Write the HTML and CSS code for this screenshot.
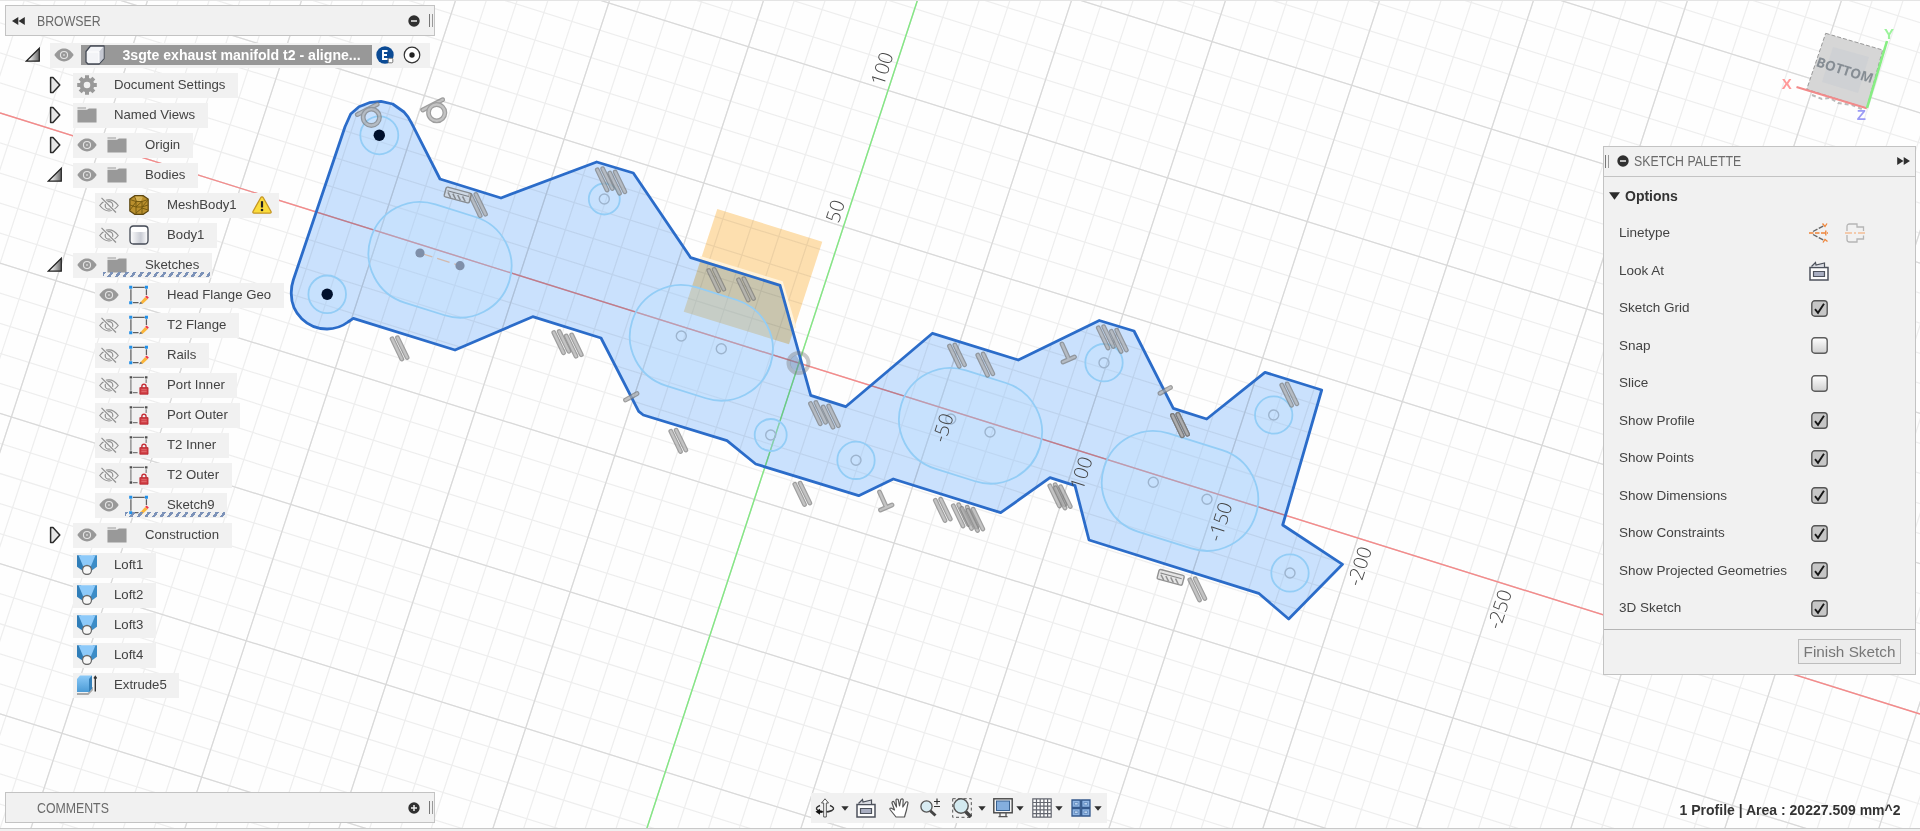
FILE: index.html
```html
<!DOCTYPE html>
<html lang="en">
<head>
<meta charset="utf-8">
<title>Sketch editor</title>
<link rel="stylesheet" href="styles.css">
</head>
<body>
<svg class="defs" width="0" height="0">
  <defs>
    <linearGradient id="gBlue" x1="0" x2="0" y1="0" y2="1"><stop offset="0" stop-color="#8ccaf8"/><stop offset="1" stop-color="#4b9bd6"/></linearGradient>
    <linearGradient id="gTri" x1="0" x2="1"><stop offset=".3" stop-color="#e8e8e8"/><stop offset="1" stop-color="#666"/></linearGradient>
    <linearGradient id="gBody" x1="0" x2="1"><stop offset="0" stop-color="#fff"/><stop offset=".6" stop-color="#c9ccd4"/><stop offset="1" stop-color="#fff"/></linearGradient>
    <symbol id="open" viewBox="0 0 16 16"><path d="M14.3 1.2v13H1.2z" fill="url(#gTri)" stroke="#222" stroke-width="1.2"/></symbol>
    <symbol id="shut" viewBox="0 0 16 18"><path d="M3.600 1.500h2.400l6.800 7.500-6.800 7.500H3.600z" fill="#e6e6e6" stroke="#2b2b2b" stroke-width="1.500" stroke-linejoin="round"/></symbol>
    <symbol id="eye" viewBox="0 0 20 14"><path d="M.3 7C3.5 2.300 6.600.6 10 .6s6.500 1.700 9.700 6.400C16.500 11.700 13.400 13.400 10 13.400S3.500 11.700.3 7z" fill="#999"/><circle cx="10" cy="7" r="4.100" fill="#e6e6e6"/><circle cx="10" cy="7" r="3" fill="#999"/><circle cx="10" cy="7" r="1.100" fill="#ccc"/></symbol>
    <symbol id="hid" viewBox="0 0 20 16"><g fill="none" stroke="#8f8f8f" stroke-width="1.200"><path d="M.8 8.500C4 4.300 7 2.800 10 2.800s6 1.500 9.200 5.700C16 12.500 13 14 10 14S4 12.500.8 8.500z"/><circle cx="10" cy="8.400" r="3.800"/><path d="M2.500.8l14.500 14.700" stroke="#f1f1f1" stroke-width="3"/><path d="M2.500.8l14.500 14.700"/></g></symbol>
    <symbol id="folder" viewBox="0 0 21 18"><path d="M.5 1h9v1.300h-9zM.5 3.500h10l2-1.200h8V17H.5z" fill="#999"/></symbol>
    <symbol id="gear" viewBox="-10 -10 20 20"><circle r="5.300" fill="none" stroke="#999" stroke-width="4"/><g stroke="#999" stroke-width="4"><path d="M0-9.800V-6M0 9.800V6M-9.800 0H-6M9.800 0H6M-6.900-6.900l2.400 2.400M6.900 6.900L4.500 4.500M-6.900 6.900l2.400-2.400M6.900-6.900L4.500-4.500"/></g></symbol>
    <symbol id="cube" viewBox="0 0 20 20"><path d="M1 6.500L5.500 1H19v12.500L14 19H3l-2-2z" fill="#f3f4f7" stroke="#444a55" stroke-width="1.300" stroke-linejoin="round"/><path d="M14 7l4.500-5.500V13.500L14 18.500z" fill="#c5c8d2"/><path d="M2 7h12v11" fill="none" stroke="#fff"/></symbol>
    <symbol id="mesh" viewBox="0 0 20 20"><path d="M.8 4l5-3.300h8.400l5 3.300v12l-5 3.300H5.800L.8 16z" fill="#b98f2d" stroke="#5d4710" stroke-width="1.200"/><path d="M1 4.500l6 2h6l6-2M7 6.500v12.500M13 6.500v12.500M1 10l6 2h6l6-2M7 12l6-5.500M1 15l6-8M7 18l6-5 6 2M13 12l6-7M5.500 1l2 5.500L14 1" fill="none" stroke="#71570f" stroke-width=".9"/><path d="M6 1.500h8L12 6H8z" fill="#e0bd62" opacity=".8"/></symbol>
    <symbol id="body" viewBox="0 0 20 20"><path d="M1 4.500Q1 1 4.500 1h11Q19 1 19 4.500v11q0 3.500-3.500 3.500h-11Q1 19 1 15.500z" fill="url(#gBody)" stroke="#444a55" stroke-width="1.300"/><path d="M2 3.500Q3 2 5 2h10q2 0 3 1.500v2Q17 7 15 7H5Q3 7 2 5.500z" fill="#fff"/></symbol>
    <symbol id="sk" viewBox="0 0 21 20"><path d="M4 1.900h12.500M2 4v12M18.300 4v6M4 18h6" stroke="#5e5e5e" stroke-width="1.300" fill="none"/><path d="M12 17.500l5-5.500 2.600 2.400-5.500 5z" fill="#fbb53a"/><path d="M10.500 19.800l1.700-2.800 2 2z" fill="#6b6b6b"/><path d="M17 11.800l1.500-1.400 2.400 2.200-1.500 1.600z" fill="#f0374b"/><path d="M.2.200h3.200v3.200H.2zM16.700.200h3.200v3.200h-3.200zM.2 16.600h3.200v3.200H.2z" fill="#1f8fe8"/></symbol>
    <symbol id="lock" viewBox="0 0 21 20"><path d="M4 2h12M2 4v12M18 4v4M4 18h5" stroke="#777" stroke-width="1.200" fill="none"/><path d="M.7.700h2.600v2.600H.7zM16.800.700h2.600v2.600h-2.600zM.7 16.600h2.600v2.600H.7z" fill="#4c4c4c"/><path d="M13.500 13v-1.500q0-2.300 2.200-2.300t2.200 2.300V13" fill="none" stroke="#c73038" stroke-width="1.500"/><path d="M11.400 12.700H20v7h-8.600z" fill="#cf3d43" stroke="#b4222b" stroke-width=".8"/><path d="M13 15h5.500M13 17h5.500" stroke="#e77b7e" stroke-width=".8"/></symbol>
    <symbol id="loft" viewBox="0 0 20 20"><path d="M0 .3h4l4 10-3 5-5-3.500z" fill="#2f7db8"/><path d="M20 .3h-4l-4 10 3 5 5-3.500z" fill="#3c8cc7"/><path d="M1.500.3h17L14 11H6z" fill="#8dcafa"/><circle cx="10" cy="15" r="4.500" fill="#f7f7f7" stroke="#6a6a6a" stroke-width="1.300"/></symbol>
    <symbol id="ext" viewBox="0 0 20 20"><path d="M0 19h11l4-4v-3" fill="none" stroke="#a9a9a9" stroke-width="1.800"/><path d="M0 4l3-3.500h12v13L12 17H0z" fill="url(#gBlue)"/><path d="M12 4l3-3.500v13L12 17z" fill="#347fb8"/><path d="M18.300 16.500V1.500M17 3.500l1.300-2 1.300 2" stroke="#333" stroke-width="1.400" fill="none"/></symbol>
    <symbol id="warn" viewBox="0 0 20 18"><path d="M10 .8q.8 0 1.300.9L19 15.500q.5 1.500-1 1.700H2Q.5 17 1 15.500L8.700 1.700Q9.200.8 10 .8z" fill="#fbdc3c" stroke="#c69724" stroke-width="1.300"/><path d="M10 5.200v6.300" stroke="#222" stroke-width="2.200"/><circle cx="10" cy="14" r="1.300" fill="#222"/></symbol>
    <symbol id="minus" viewBox="0 0 12 12"><circle cx="6" cy="6" r="5.700" fill="#303030"/><path d="M3 6h6" stroke="#eee" stroke-width="1.500"/></symbol>
    <symbol id="plus" viewBox="0 0 12 12"><circle cx="6" cy="6" r="5.700" fill="#303030"/><path d="M3 6h6M6 3v6" stroke="#eee" stroke-width="1.500"/></symbol>
    <symbol id="back" viewBox="0 0 13 8"><path d="M6.300 0v8L0 4zM12.800 0v8L6.500 4z" fill="#2f2f2f"/></symbol>
    <symbol id="camera" viewBox="0 0 20 20"><path d="M1 6.500h18V19H1z" fill="#fdfdfd" stroke="#4d525c" stroke-width="1.500"/><path d="M4.500 10.500h11v5h-11z" fill="#a9aec1" stroke="#4d525c" stroke-width="1.200"/><path d="M2.500 5.500L6.500 1.500l.5 2.500 8.500-2v4" fill="#d9dbe2" stroke="#4d525c" stroke-width="1.200"/></symbol>
    <symbol id="check" viewBox="0 0 17 17"><rect x=".8" y=".8" width="15.400" height="15.400" rx="3" fill="#c6c6c6" stroke="#565656" stroke-width="1.400"/><path d="M4 9.200l3 3.600L13 3.800" fill="none" stroke="#171717" stroke-width="1.900"/></symbol>
    <linearGradient id="gBox" x1="0" x2="0" y1="0" y2="1"><stop offset="0" stop-color="#fff"/><stop offset="1" stop-color="#cfcfcf"/></linearGradient>
    <symbol id="box" viewBox="0 0 17 17"><rect x=".8" y=".8" width="15.400" height="15.400" rx="3" fill="url(#gBox)" stroke="#5d5d5d" stroke-width="1.400"/></symbol>
    <symbol id="drop" viewBox="0 0 8 5"><path d="M.3.300h7.400L4 4.800z" fill="#2f2f2f"/></symbol>
    <g id="par" class="glyph"><path class="o" d="M-7.200-10.200L2.500 10M-1.800-11.300L7.800 8.500"/><path class="i" d="M-7.200-10.200L2.500 10M-1.800-11.300L7.800 8.500"/></g>
    <g id="perp" class="glyph"><path class="o" d="M-5.500-8.500L1.500 7M-4.500 9.500L7 4.500"/><path class="i" d="M-5.500-8.500L1.500 7M-4.500 9.500L7 4.500"/></g>
    <g id="tan" class="glyph"><path class="o" d="M-14-2.700L6-13"/><path class="i" d="M-14-2.700L6-13"/><circle class="o" r="8.200"/><circle class="i" r="8.200"/></g>
    <g id="hatch" transform="rotate(15)" fill="none" stroke="#777" opacity=".8"><rect x="-13" y="-5" width="26" height="10" rx="1.500" fill="#d0d0d0" fill-opacity=".7" stroke-width="1.400"/><path d="M-11-1.500h22" stroke="#666"/><path d="M-10 0l4 4.500M-5 0l4 4.500M0 0l4 4.500M5 0l4 4.500" stroke-width="1.500"/></g>
  </defs>
</svg>

<main class="app">
  <svg class="canvas" viewBox="0 0 1920 831" width="1920" height="831">
    <!-- grid: one unit is one minor cell -->
    <g transform="matrix(27.940 8.745 -8.910 27.260 799 363)" fill="none">
      <g stroke="#eeeeee">
        <path d="M-40.021 0H50" stroke-width="90" stroke-dasharray=".042 .958"/>
        <path d="M0-40.021V40" stroke-width="110" stroke-dasharray=".042 .958"/>
      </g>
      <g stroke="#d9d9d9">
        <path d="M-40.021 0H50" stroke-width="90" stroke-dasharray=".042 4.958"/>
        <path d="M0-40.021V40" stroke-width="110" stroke-dasharray=".042 4.958"/>
      </g>
    </g>
    <path d="M0 113L1920 714" stroke="#f58a8a" stroke-width="1.400"/>
    <path d="M917.500 0L646 831" stroke="#83e883" stroke-width="1.400"/>

    <path class="profile" d="M345 126.700L350.700 114 359 106.700 369.300 102.700 381 101.300 392.700 104 404 112Q408 116 411.700 123.300L440 179 501 198 596.700 162 633.300 173 690.700 257.700 780 285.300 810.700 395.300 845.700 406.700 932.500 333.300 1018.300 360 1099.300 320.500 1134 331 1173.300 408.300 1206.700 419 1265 372.300 1321.700 390 1282.700 525 1342.500 564.300 1288.700 619 1258.700 593.300 1089 540 1075 485.700 1050 477.700 1000.700 512.700 893.300 479 858.700 495.700 755.700 464 727 440.700 643.300 415 638.700 411.300 601 338 532.700 316.700 455 350 353.300 318.300 348 322A34.800 34.800 0 0 1 327 329A36 35 0 0 1 291.300 294Q291 287 293.300 280Z"/>
    <path class="plane" d="M717.300 209L822.300 241.700 789 344.300 683.700 311.700z"/>
    <path class="halo" d="M700 257.500L781.500 282.500 795 328"/>
    <path class="outline" d="M345 126.700L350.700 114 359 106.700 369.300 102.700 381 101.300 392.700 104 404 112Q408 116 411.700 123.300L440 179 501 198 596.700 162 633.300 173 690.700 257.700 780 285.300 810.700 395.300 845.700 406.700 932.500 333.300 1018.300 360 1099.300 320.500 1134 331 1173.300 408.300 1206.700 419 1265 372.300 1321.700 390 1282.700 525 1342.500 564.300 1288.700 619 1258.700 593.300 1089 540 1075 485.700 1050 477.700 1000.700 512.700 893.300 479 858.700 495.700 755.700 464 727 440.700 643.300 415 638.700 411.300 601 338 532.700 316.700 455 350 353.300 318.300 348 322A34.800 34.800 0 0 1 327 329A36 35 0 0 1 291.300 294Q291 287 293.300 280Z"/>

    <g class="pocket">
      <rect x="-51.500" y="-51.500" width="145" height="103" rx="51.500" transform="translate(420 253.500) rotate(17.500)"/>
      <rect x="-51.500" y="-51.500" width="145" height="103" rx="51.500" transform="translate(681.300 336.500) rotate(17.500)"/>
      <rect x="-51.500" y="-51.500" width="145" height="103" rx="51.500" transform="translate(950.500 419.500) rotate(17.500)"/>
      <rect x="-51.500" y="-51.500" width="159" height="103" rx="51.500" transform="translate(1153.300 482.500) rotate(17.500)"/>
      <circle cx="379.300" cy="135.300" r="19"/><circle cx="327.200" cy="294.300" r="18.800"/>
      <circle cx="604.300" cy="199" r="15.500"/><circle cx="770.700" cy="435" r="16"/>
      <circle cx="856" cy="460.300" r="18.700"/><circle cx="1104" cy="362.700" r="18.700"/>
      <circle cx="1273.700" cy="415" r="18.700"/><circle cx="1290" cy="573" r="18.700"/>
    </g>
    <g class="points">
      <circle cx="604.300" cy="199" r="5"/><circle cx="770.700" cy="435" r="5"/><circle cx="856" cy="460.300" r="5"/>
      <circle cx="1104" cy="362.700" r="5"/><circle cx="1273.700" cy="415" r="5"/><circle cx="1290" cy="573" r="5"/>
      <circle cx="681.300" cy="336" r="5"/><circle cx="721.300" cy="348.700" r="5"/><circle cx="950.700" cy="419" r="5"/>
      <circle cx="990" cy="432" r="5"/><circle cx="1153.300" cy="482.300" r="5"/><circle cx="1207" cy="499.300" r="5"/>
    </g>
    <circle cx="379.300" cy="135.300" r="5.700" fill="#00102c"/><circle cx="327.200" cy="294.300" r="5.700" fill="#00102c"/>
    <path d="M420 253L460 265.700" stroke="#d3b9ad" stroke-width="1.300" stroke-dasharray="13 5"/>
    <circle cx="420" cy="253" r="4.600" fill="#7f8fa9"/><circle cx="460" cy="265.700" r="4.600" fill="#7f8fa9"/>
    <circle cx="798.500" cy="363" r="10" fill="none" stroke="#777" stroke-opacity=".4" stroke-width="4"/>
    <path d="M796 355a8 8 0 1 0 8 13z" fill="#6f87a8" opacity=".45"/>

    <g class="marks">
      <use href="#tan" x="436.700" y="112.700"/><use href="#tan" x="371.300" y="117.300"/>
      <use href="#par" x="399.300" y="349"/><use href="#par" x="477.700" y="205.700"/>
      <use href="#par" x="604.500" y="180"/><use href="#par" x="617" y="183.300"/>
      <use href="#par" x="561" y="342.800"/><use href="#par" x="573.500" y="346.200"/>
      <use href="#par" x="716" y="280.700"/><use href="#par" x="745.700" y="290"/>
      <use href="#par" x="678" y="441.500"/><use href="#par" x="802" y="494.500"/>
      <use href="#par" x="817.700" y="413.800"/><use href="#par" x="830.500" y="417.200"/>
      <use href="#par" x="956.700" y="356.300"/><use href="#par" x="985" y="365.300"/>
      <use href="#par" x="942.500" y="510.500"/><use href="#par" x="960.500" y="516"/>
      <use href="#par" x="969" y="518.500"/><use href="#par" x="975" y="520.500"/>
      <use href="#par" x="1105.500" y="338"/><use href="#par" x="1118.500" y="341.500"/>
      <use href="#par" x="1289" y="395.300"/>
      <use href="#par" x="1179.700" y="425.700"/><use href="#par" x="1179.700" y="425.700"/><use href="#par" x="1179.700" y="425.700" class="dark"/>
      <use href="#par" x="1057" y="496"/><use href="#par" x="1062.500" y="498"/>
      <use href="#par" x="1197" y="590"/>
      <use href="#perp" x="885" y="500.500"/><use href="#perp" x="1067.500" y="352.500"/>
      <use href="#hatch" x="0" y="0" transform="translate(457.700 195)"/><use href="#hatch" transform="translate(1170.700 577.300)"/>
      <g class="glyph"><path class="o" d="M625.500 400L637 393.600M1160 393.300L1170.500 387.500"/><path class="i" d="M625.500 400L637 393.600M1160 393.300L1170.500 387.500"/></g>
    </g>

    <g class="ruler">
      <text transform="translate(881.500 68.500) rotate(-72)">100</text>
      <text transform="translate(834.700 211) rotate(-72)">50</text>
      <text transform="translate(942.300 427.500) rotate(-72)">-50</text>
      <text transform="translate(1080.700 473) rotate(-72)">100</text>
      <text transform="translate(1219.500 521.500) rotate(-72)">-150</text>
      <text transform="translate(1359 566) rotate(-72)">-200</text>
      <text transform="translate(1499 609) rotate(-72)">-250</text>
    </g>

    <g class="viewcube">
      <path d="M1812 95l10 4 8-1 8 5 14 2 12 5" fill="none" stroke="#bbb" stroke-width="2" stroke-dasharray="4 3"/>
      <path d="M1825.700 33.300L1882.700 50 1866.700 108.300 1806.700 89.300z" fill="#d6d6d6" stroke="#999" stroke-dasharray="4 2"/>
      <path d="M1833 47L1869 57 1858 93 1822 82z" fill="#cfd1d4"/>
      <path d="M1796.500 87L1866.700 108.300" stroke="#f28a8a" stroke-width="2.200"/>
      <path d="M1887 41L1867 108" stroke="#87ee83" stroke-width="2.600"/>
      <text class="face" transform="translate(1845 70) rotate(17) skewX(-2)">BOTTOM</text>
      <text class="ax" x="1786.700" y="89" fill="#f99">X</text>
      <text class="ax" x="1889" y="38.500" fill="#9bf39b">Y</text>
      <text class="ax" x="1861.300" y="120" fill="#9b9bf5">Z</text>
    </g>
    <path d="M0 .5H1920" stroke="#e4e4e4"/>
    <path d="M0 830H1920" stroke="#f0f0f0" stroke-width="3"/>
    <path d="M0 828.500H1920" stroke="#c9c9c9" stroke-width="1.200"/>
  </svg>

  <div class="hud">
    <section class="left">
      <header class="bar"><svg class="bk"><use href="#back"/></svg><h2>BROWSER</h2><svg class="dot"><use href="#minus"/></svg><i class="grip"></i></header>
      <ul class="tree">
        <li class="l0"><svg class="tw"><use href="#open"/></svg><div class="chip root"><svg class="e"><use href="#eye"/></svg><div class="name"><svg class="k"><use href="#cube"/></svg><b>3sgte exhaust manifold t2 - aligne...</b></div>
          <svg class="badge" viewBox="0 0 18 18"><circle cx="9" cy="9" r="8.700" fill="#0b4a94"/><path d="M11.500 5H7v8h4.500M7 9h4" fill="none" stroke="#fff" stroke-width="1.900"/><rect x="12.300" y="12.300" width="4.500" height="4.500" rx="1" fill="#fff" stroke="#777"/></svg>
          <svg class="radio" viewBox="0 0 18 18"><circle cx="9" cy="9" r="7.800" fill="#fff" stroke="#333" stroke-width="1.200"/><circle cx="9" cy="9" r="2.700" fill="#222"/></svg></div></li>
        <li class="l1"><svg class="tw"><use href="#shut"/></svg><div class="chip"><svg class="k"><use href="#gear"/></svg><span>Document Settings</span></div></li>
        <li class="l1"><svg class="tw"><use href="#shut"/></svg><div class="chip"><svg class="k"><use href="#folder"/></svg><span>Named Views</span></div></li>
        <li class="l1"><svg class="tw"><use href="#shut"/></svg><div class="chip"><svg class="e"><use href="#eye"/></svg><svg class="k"><use href="#folder"/></svg><span>Origin</span></div></li>
        <li class="l1"><svg class="tw"><use href="#open"/></svg><div class="chip"><svg class="e"><use href="#eye"/></svg><svg class="k"><use href="#folder"/></svg><span>Bodies</span></div></li>
        <li class="l2"><div class="chip mesh"><svg class="e"><use href="#hid"/></svg><svg class="k"><use href="#mesh"/></svg><span>MeshBody1</span><svg class="w"><use href="#warn"/></svg></div></li>
        <li class="l2"><div class="chip"><svg class="e"><use href="#hid"/></svg><svg class="k"><use href="#body"/></svg><span>Body1</span></div></li>
        <li class="l1"><svg class="tw"><use href="#open"/></svg><div class="chip active"><svg class="e"><use href="#eye"/></svg><svg class="k"><use href="#folder"/></svg><span>Sketches</span></div></li>
        <li class="l2"><div class="chip"><svg class="e"><use href="#eye"/></svg><svg class="k"><use href="#sk"/></svg><span>Head Flange Geo</span></div></li>
        <li class="l2"><div class="chip"><svg class="e"><use href="#hid"/></svg><svg class="k"><use href="#sk"/></svg><span>T2 Flange</span></div></li>
        <li class="l2"><div class="chip"><svg class="e"><use href="#hid"/></svg><svg class="k"><use href="#sk"/></svg><span>Rails</span></div></li>
        <li class="l2"><div class="chip"><svg class="e"><use href="#hid"/></svg><svg class="k"><use href="#lock"/></svg><span>Port Inner</span></div></li>
        <li class="l2"><div class="chip"><svg class="e"><use href="#hid"/></svg><svg class="k"><use href="#lock"/></svg><span>Port Outer</span></div></li>
        <li class="l2"><div class="chip"><svg class="e"><use href="#hid"/></svg><svg class="k"><use href="#lock"/></svg><span>T2 Inner</span></div></li>
        <li class="l2"><div class="chip"><svg class="e"><use href="#hid"/></svg><svg class="k"><use href="#lock"/></svg><span>T2 Outer</span></div></li>
        <li class="l2"><div class="chip active"><svg class="e"><use href="#eye"/></svg><svg class="k"><use href="#sk"/></svg><span>Sketch9</span></div></li>
        <li class="l1"><svg class="tw"><use href="#shut"/></svg><div class="chip"><svg class="e"><use href="#eye"/></svg><svg class="k"><use href="#folder"/></svg><span>Construction</span></div></li>
        <li class="l1 leaf"><div class="chip"><svg class="k"><use href="#loft"/></svg><span>Loft1</span></div></li>
        <li class="l1 leaf"><div class="chip"><svg class="k"><use href="#loft"/></svg><span>Loft2</span></div></li>
        <li class="l1 leaf"><div class="chip"><svg class="k"><use href="#loft"/></svg><span>Loft3</span></div></li>
        <li class="l1 leaf"><div class="chip"><svg class="k"><use href="#loft"/></svg><span>Loft4</span></div></li>
        <li class="l1 leaf"><div class="chip"><svg class="k"><use href="#ext"/></svg><span>Extrude5</span></div></li>
      </ul>
      <header class="bar comments"><h2>COMMENTS</h2><svg class="dot"><use href="#plus"/></svg><i class="grip"></i></header>
    </section>

    <nav class="tools">
      <svg class="t" viewBox="0 0 20 20"><path d="M5 7.500Q-1 10 3 12.500q7 3 14 0 4-2.500-2-5" fill="none" stroke="#333" stroke-width="1.400"/><path d="M8.700 19V5H6.500L10 .8 13.500 5h-2.200v14z" fill="#fff" stroke="#555"/><path d="M7 13.800H3.500" stroke="#111" stroke-width="2"/><path d="M5 10.800v6L.5 13.800z" fill="#111"/></svg>
      <svg class="d d1"><use href="#drop"/></svg>
      <svg class="t t2"><use href="#camera"/></svg>
      <svg class="t t3" viewBox="0 0 20 20"><path d="M7 19L1 11.500q-.5-1.500 1-1.500l3.500 2L3 5q0-1.800 1.700-1.500L7.500 9 7 2q.5-1.700 2.200-.5L10.500 8l1.300-6.500q1.500-1.300 2.400.3L13.800 9 17 4q1.500-.8 2 .8L17.500 12 15.500 19z" fill="#fff" stroke="#555" stroke-width="1.200" stroke-linejoin="round"/></svg>
      <svg class="t t4" viewBox="0 0 20 20"><path d="M10 12.500l5.500 5" stroke="#444" stroke-width="3"/><circle cx="6.500" cy="8.500" r="5.600" fill="#d8ecf3" stroke="#555" stroke-width="1.300"/><path d="M14 3.500h6M17 .5v6M14 8.500h6" stroke="#333" stroke-width="1.200"/></svg>
      <svg class="t t5" viewBox="0 0 20 20"><rect x=".7" y=".7" width="18.600" height="18.600" fill="none" stroke="#555" stroke-dasharray="3 2.500"/><path d="M13 13l6 6" stroke="#444" stroke-width="3.500"/><circle cx="9" cy="8" r="7.200" fill="#d3eaf0" stroke="#555" stroke-width="1.400"/></svg>
      <svg class="d d2"><use href="#drop"/></svg>
      <svg class="t t6" viewBox="0 0 20 20"><rect x=".8" y=".8" width="18.400" height="14" fill="#f3f3f3" stroke="#444" stroke-width="1.400"/><rect x="3.500" y="3" width="13" height="9.500" fill="#84aede" stroke="#38608f"/><path d="M7 15v3M13 15v3M5.500 18.700h9" stroke="#555" stroke-width="1.300"/></svg>
      <svg class="d d3"><use href="#drop"/></svg>
      <svg class="t t7" viewBox="0 0 20 20"><path d="M.8.800h18.400v18.400H.8zM.8 4.500h18.400M.8 8.200h18.400M.8 11.900h18.400M.8 15.600h18.400M4.500.8v18.400M8.200.8v18.400M11.900.8v18.400M15.600.8v18.400" fill="#fcfcfc" stroke="#63666f" stroke-width="1.200"/></svg>
      <svg class="d d3"><use href="#drop"/></svg>
      <svg class="t t7" viewBox="0 0 20 20"><path d="M1 2h8.300v7.300H1zM10.700 2H19v7.300h-8.300zM1 10.700h8.300V18H1zM10.700 10.700H19V18h-8.300z" fill="#8db4e4" stroke="#34588c" stroke-width="1.300"/><path d="M3.500 4.500h3.500V7H3.500zM13 4.500h3.500V7H13zM3.500 13h3.500v2.500H3.500zM13 13h3.500v2.500H13z" fill="#b8d2f0" stroke="#5b84b8" stroke-width=".7"/></svg>
      <svg class="d d3"><use href="#drop"/></svg>
    </nav>

    <section class="right">
      <div class="palette">
        <header class="phead"><i class="grip"></i><svg class="dot"><use href="#minus"/></svg><h2>SKETCH PALETTE</h2><svg class="bk fwd"><use href="#back"/></svg></header>
        <div class="opts"><svg class="caret" viewBox="0 0 11 8"><path d="M0 .3h11L5.500 7.700z" fill="#2b2b2b"/></svg><b>Options</b></div>
        <div class="row"><span>Linetype</span><svg class="ic" viewBox="0 0 20 20"><path d="M4 8.500L15.500 2.500M4 11.500l11.500 6" stroke="#666" stroke-width="1.400" stroke-dasharray="5 1.500"/><path d="M0 10h19" stroke="#ee8438" stroke-width="1.500" stroke-dasharray="4.500 1.500"/><path d="M13.500.5l2.500 3L18 .5M14 19.500l2-3 2.500 2M16.800 7.500v5" stroke="#ee8438" stroke-width="1.300" fill="none"/></svg><svg class="ic ic2" viewBox="0 0 20 20"><path d="M2 8V3.500Q2 1 4.500 1H12v3h6.500v4M2 12v4.500Q2 19 4.500 19H12v-3h6.500v-3.500" fill="none" stroke="#b5b5b5" stroke-width="1.300"/><path d="M0 10h20" stroke="#f3bd95" stroke-width="1.300" stroke-dasharray="7 2 2 2"/></svg></div>
        <div class="row"><span>Look At</span><svg class="ic"><use href="#camera"/></svg></div>
        <div class="row"><span>Sketch Grid</span><svg class="cb"><use href="#check"/></svg></div>
        <div class="row"><span>Snap</span><svg class="cb"><use href="#box"/></svg></div>
        <div class="row"><span>Slice</span><svg class="cb"><use href="#box"/></svg></div>
        <div class="row"><span>Show Profile</span><svg class="cb"><use href="#check"/></svg></div>
        <div class="row"><span>Show Points</span><svg class="cb"><use href="#check"/></svg></div>
        <div class="row"><span>Show Dimensions</span><svg class="cb"><use href="#check"/></svg></div>
        <div class="row"><span>Show Constraints</span><svg class="cb"><use href="#check"/></svg></div>
        <div class="row"><span>Show Projected Geometries</span><svg class="cb"><use href="#check"/></svg></div>
        <div class="row"><span>3D Sketch</span><svg class="cb"><use href="#check"/></svg></div>
        <footer><button>Finish Sketch</button></footer>
      </div>
      <p class="status">1 Profile | Area : 20227.509 mm^2</p>
    </section>
  </div>
</main>
</body>
</html>
```
FILE: styles.css
```css
* { box-sizing: border-box; margin: 0; padding: 0; }
body { background: #fefefe; font: 13.2px/16px "Liberation Sans", Arial, sans-serif; color: #434343; overflow: hidden; }
.defs { display: block; position: absolute; }
.app { position: relative; width: 1920px; height: 831px; overflow: hidden; }
.canvas { display: block; }
.hud { position: absolute; inset: 0; display: flex; justify-content: space-between; padding: 5px 4px 8px 5px; }
.hud svg { display: block; flex: none; }

.profile { fill: #cbe2fe; mix-blend-mode: multiply; }
.outline { fill: none; stroke: #2b6cc9; stroke-width: 2.8; stroke-linejoin: round; }
.plane { fill: #fee0b0; mix-blend-mode: multiply; }
.halo { fill: none; stroke: #fff3dc; stroke-width: 3; }
.pocket { fill: #bfe2ff; fill-opacity: .3; stroke: #93cdf6; stroke-width: 1.8; }
.points { fill: none; stroke: #9db4ce; stroke-width: 1.4; }
.glyph { fill: none; stroke-linecap: round; opacity: .72; }
.glyph .o { stroke: #7a7a7a; stroke-width: 4.8; }
.glyph .i { stroke: #adadad; stroke-width: 2.4; }
.ruler { font: 300 19.5px "Open Sans", sans-serif; fill: #444; text-anchor: middle; dominant-baseline: central; }
.viewcube { text-anchor: middle; }
.face { font: bold 13.5px "Open Sans", sans-serif; fill: #868d94; dominant-baseline: central; }
.ax { font: bold 15px "Liberation Sans", sans-serif; }

.left { width: 430px; display: flex; flex-direction: column; }
.bar { height: 31px; border: 1px solid #c3c3c3; background: #f1f1f1; display: flex; align-items: center; }
h2 { font-size: 14px; font-weight: normal; color: #6a6a6a; transform: scaleX(.88); transform-origin: 0 50%; white-space: nowrap; }
.bar h2 { margin-left: 12px; flex: 1; }
.bk { width: 13px; height: 8px; margin-left: 6px; }
.comments h2 { margin-left: 31px; }
.comments { margin-top: auto; }
.dot { width: 12px; height: 12px; }
.bar .grip { margin: 0 1px 0 9px; }
.grip { width: 4px; height: 13px; border-left: 1px solid #777; border-right: 1px solid #999; }

.tree { list-style: none; padding-top: 4px; }
.tree li { height: 30px; display: flex; align-items: center; }
.chip { height: 25px; background: #f1f1f1; display: flex; align-items: center; padding: 0 12.5px 0 4px; white-space: nowrap; }
.l0 { padding-left: 20px; }
.l0 .tw { margin-right: 9px; }
.l1 { padding-left: 42px; }
.l1 .tw { margin-right: 10px; }
.leaf { padding-left: 68px; }
.l2 { padding-left: 90px; }
.tw { width: 16px; height: 18px; }
.e { width: 20px; height: 16px; margin-right: 10px; }
.k { width: 20px; height: 20px; margin-right: 17px; }
.e + .k { margin-right: 18px; }
.w { width: 20px; height: 18px; margin-left: 15px; }
.mesh { padding-right: 7px; }
.root { width: 380px; padding-right: 0; }
.root .e { margin-right: 7px; }
.name { flex: none; width: 291px; height: 20px; background: #989898; display: flex; align-items: center; padding-left: 4px; color: #fff; font-size: 14.1px; }
.root .k { margin-right: 17.5px; }
.badge { width: 18px; height: 18px; margin-left: 4px; }
.radio { width: 18px; height: 18px; margin-left: 9px; }
.active { position: relative; }
.active::after { content: ""; position: absolute; left: 30px; right: 2px; bottom: 1px; height: 4.5px; background: repeating-linear-gradient(125deg, #7c92b8 0 2.6px, transparent 2.6px 6.2px); }

.tools { width: 296px; height: 30px; margin: auto auto 0 376px; background: #f1f1f1; display: flex; align-items: center; padding-left: 4px; position: relative; }
.t { width: 20px; height: 20px; }
.d { width: 8px; height: 5px; }
.d1 { margin-left: 5.5px; }
.t2 { margin-left: 7.5px; }
.t3 { margin-left: 12.5px; }
.t4 { margin-left: 11.8px; }
.t5 { margin-left: 12px; }
.d2 { margin-left: 6.2px; }
.t6 { margin-left: 7px; }
.d3 { margin-left: 2.5px; }
.t7 { margin-left: 8.3px; }

.right { width: 313px; padding-top: 140.5px; display: flex; flex-direction: column; }
.palette { height: 529px; border: 1px solid #c3c3c3; background: #f1f1f1; display: flex; flex-direction: column; font-size: 13.5px; }
.phead { height: 30px; border-bottom: 1px solid #c3c3c3; display: flex; align-items: center; padding: 0 5px 0 1px; }
.phead .dot { margin: 0 5px 0 8px; }
.phead h2 { flex: 1; }
.fwd { transform: scaleX(-1); }
.opts { height: 38px; display: flex; align-items: center; padding-left: 5px; font-size: 14px; color: #333; }
.caret { width: 11px; height: 8px; margin-right: 5px; }
.row { height: 37.5px; display: grid; grid-template-columns: 190px 20px 20px; column-gap: 0; align-items: center; padding-left: 15px; }
.row span { white-space: nowrap; }
.ic { width: 20px; height: 20px; }
.ic2 { margin-left: 16px; }
.cb { width: 17px; height: 17px; margin-left: 1.5px; }
footer { margin-top: auto; height: 45px; border-top: 1px solid #b5b5b5; display: flex; justify-content: flex-end; align-items: center; padding: 0 14px 0 0; }
button { width: 103px; height: 25px; border: 1px solid #bdbdbd; background: #ececec; color: #777; font: 15.3px "Liberation Sans", Arial, sans-serif; white-space: nowrap; }
.status { margin-top: auto; font-weight: bold; font-size: 14px; color: #333; text-align: right; padding: 0 15.5px 5.5px 0; white-space: nowrap; }
```
